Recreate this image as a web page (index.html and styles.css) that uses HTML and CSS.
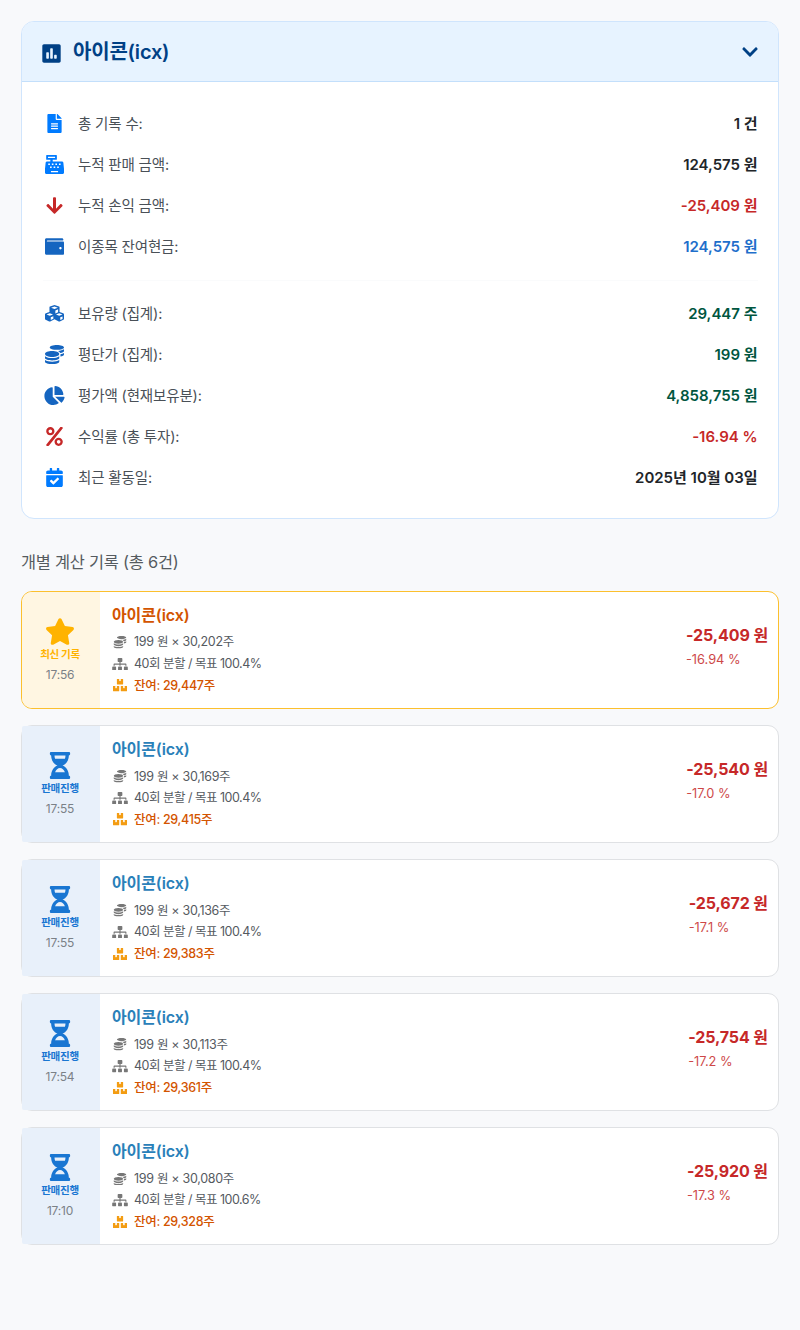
FILE: index.html
```html
<!DOCTYPE html>
<html lang="ko">
<head>
    <meta charset="UTF-8">
    <meta name="viewport" content="width=device-width, initial-scale=1.0">
    <title>아이콘(icx)</title>
    <link rel="stylesheet" href="styles.css">
</head>
<body>
    <svg class="sprite">
        <symbol id="poll" viewBox="0 0 448 512"><path fill-rule="evenodd" d="M408 32H40C18 32 0 50 0 72v368c0 22 18 40 40 40h368c22 0 40-18 40-40V72c0-22-18-40-40-40zM160 368c0 9-7 16-16 16h-32c-9 0-16-7-16-16V240c0-9 7-16 16-16h32c9 0 16 7 16 16zm96 0c0 9-7 16-16 16h-32c-9 0-16-7-16-16V144c0-9 7-16 16-16h32c9 0 16 7 16 16zm96 0c0 9-7 16-16 16h-32c-9 0-16-7-16-16v-64c0-9 7-16 16-16h32c9 0 16 7 16 16z"/></symbol>
        <symbol id="chevron" viewBox="0 0 448 512"><path d="M207 381.500 12.700 187.100c-9.400-9.400-9.400-24.600 0-33.900l22.700-22.700c9.400-9.400 24.500-9.400 33.900 0L224 284.500l154.700-154c9.400-9.300 24.500-9.300 33.900 0l22.700 22.700c9.400 9.400 9.400 24.600 0 33.900L241 381.500c-9.400 9.400-24.600 9.400-34 0z"/></symbol>
        <symbol id="file" viewBox="0 0 384 512"><path fill-rule="evenodd" d="M224 136V0H24C10.700 0 0 10.700 0 24v464c0 13.300 10.700 24 24 24h336c13.300 0 24-10.700 24-24V160H248c-13.200 0-24-10.800-24-24zm64 260c0 6.600-5.400 12-12 12H108c-6.600 0-12-5.400-12-12v-8c0-6.600 5.400-12 12-12h168c6.600 0 12 5.400 12 12zm0-64c0 6.600-5.400 12-12 12H108c-6.600 0-12-5.400-12-12v-8c0-6.600 5.400-12 12-12h168c6.600 0 12 5.400 12 12zm0-72v8c0 6.600-5.400 12-12 12H108c-6.600 0-12-5.400-12-12v-8c0-6.600 5.400-12 12-12h168c6.600 0 12 5.400 12 12zM384 121.900v6.100H256V0h6.100c6.400 0 12.500 2.500 17 7l97.900 98c4.500 4.500 7 10.600 7 16.900z"/></symbol>
        <symbol id="register" viewBox="0 0 512 512"><path fill-rule="evenodd" d="M48 0h256c10 0 16 6 16 16v96c0 10-6 16-16 16h-96v48h250c20 0 32 10 36 28l18 164v112c0 18-14 32-32 32H32c-18 0-32-14-32-32V368l18-164c4-18 16-28 36-28h90v-48H48c-10 0-16-6-16-16V16C32 6 38 0 48 0zm32 48v32h192V48zM88 226h44v42H88zm96 0h44v42h-44zm96 0h44v42h-44zm96 0h44v42h-44zM136 308h44v42h-44zm96 0h44v42h-44zm96 0h44v42h-44zM160 430v32h192v-32z"/></symbol>
        <symbol id="arrow" viewBox="0 0 448 512"><path d="M413.100 222.500l22.200 22.200c9.400 9.400 9.400 24.600 0 33.900L241 473c-9.400 9.400-24.600 9.400-33.900 0L12.700 278.600c-9.400-9.400-9.400-24.600 0-33.900l22.200-22.200c9.500-9.500 25-9.300 34.300.4L184 343.400V56c0-13.300 10.700-24 24-24h32c13.300 0 24 10.700 24 24v287.400l114.800-120.500c9.300-9.800 24.800-10 34.300-.4z"/></symbol>
        <symbol id="wallet" viewBox="0 0 512 512"><path fill-rule="evenodd" d="M484 120H64c-20 0-20-28 0-28h416c12 0 16-6 16-16 0-26-16-44-40-44H40C16 32 0 48 0 72v368c0 24 16 40 40 40h440c20 0 32-12 32-32V152c0-20-10-32-28-32zM416 336c-17.700 0-32-14.300-32-32s14.300-32 32-32 32 14.300 32 32-14.300 32-32 32z"/></symbol>
        <symbol id="cubes" viewBox="0 0 512 512"><path fill-rule="evenodd" d="M256 24 378 68q14 5 14 20v126l98 37q22 8 22 32v112q0 20-18 29l-94 47q-14 7-28 0l-116-57-116 57q-14 7-28 0l-94-47Q0 415 0 395V283q0-24 22-32l98-37V88q0-15 14-20zM165 98l91 36 91-36-91-34zm114 76v82l74-32v-83zM41 282l88 36 88-36-88-33zm114 78v72l70-35v-66zM295 282l88 36 88-36-88-33zm116 78v72l62-31v-67z"/></symbol>
        <symbol id="coins" viewBox="0 0 512 512"><path d="M0 405.300V448c0 35.300 86 64 192 64s192-28.700 192-64v-42.700C342.700 434.400 267.200 448 192 448S41.300 434.400 0 405.300zM320 128c106 0 192-28.700 192-64S426 0 320 0 128 28.700 128 64s86 64 192 64zM0 300.400V352c0 35.300 86 64 192 64s192-28.700 192-64v-51.600c-41.300 34-116.900 51.600-192 51.600S41.300 334.400 0 300.400zm416 11c57.300-11.100 96-31.700 96-55.400v-42.700c-23.200 16.400-57.300 27.600-96 34.500v63.600zM192 160C86 160 0 195.800 0 240s86 80 192 80 192-35.800 192-80-86-80-192-80zm219.300 56.300c60-10.800 100.700-32 100.700-56.300v-42.700c-35.500 25.100-96.500 38.600-160.700 41.800 29.500 14.300 51.200 33.500 60 57.200z"/></symbol>
        <symbol id="pie" viewBox="0 0 544 512"><path d="M527.800 288H290.500l158 158c6 6 15.800 6.500 22.200.8 38.700-36.500 65.300-85.600 73.100-140.800 1.400-9.500-6.500-18-16-18zm-15.800-64.800C503.700 103.700 408.300 8.300 288.800 0c-9.200-.6-16.800 7.100-16.800 16.200V240h223.800c9.100 0 16.800-7.600 16.200-16.800zM224 288V50.700c0-9.600-8.500-17.400-18-16C86.500 51.600-4.800 155.400.2 280.100 5.300 408.100 114.400 513.500 242.500 511.900c50.400-.6 96.900-16.900 135.300-44 7.900-5.600 8.400-17.200 1.600-24.100z"/></symbol>
        <symbol id="percent" viewBox="0 0 448 512"><path fill-rule="evenodd" d="M112 224c61.900 0 112-50.100 112-112S173.900 0 112 0 0 50.100 0 112s50.100 112 112 112zm0-160c26.500 0 48 21.500 48 48s-21.500 48-48 48-48-21.500-48-48 21.500-48 48-48zm224 224c-61.900 0-112 50.100-112 112s50.100 112 112 112 112-50.100 112-112-50.100-112-112-112zm0 160c-26.500 0-48-21.500-48-48s21.500-48 48-48 48 21.500 48 48-21.500 48-48 48zM392.300.2l31.600-.1c19.400-.1 30.900 21.800 19.700 37.800L77.400 501.600a24 24 0 0 1-19.600 10.200l-33.400.1c-19.500 0-30.900-21.900-19.700-37.800l368-463.700c4.500-6.400 11.800-10.200 19.600-10.200z"/></symbol>
        <symbol id="calendar" viewBox="0 0 448 512"><path fill-rule="evenodd" d="M436 160H12c-6.600 0-12-5.400-12-12v-36c0-26.500 21.500-48 48-48h48V12c0-6.600 5.400-12 12-12h40c6.600 0 12 5.400 12 12v52h128V12c0-6.600 5.400-12 12-12h40c6.600 0 12 5.400 12 12v52h48c26.500 0 48 21.500 48 48v36c0 6.600-5.400 12-12 12zM12 192h424c6.600 0 12 5.400 12 12v260c0 26.500-21.500 48-48 48H48c-26.500 0-48-21.500-48-48V204c0-6.600 5.400-12 12-12zm333.300 95.900-28.200-28.400c-4.700-4.700-12.300-4.700-17-.1l-106 105.200-46-46.400c-4.700-4.700-12.300-4.700-17-.1l-28.400 28.200c-4.700 4.700-4.700 12.300-.1 17l82.600 83.300c4.700 4.700 12.300 4.700 17 .1l143-141.800c4.700-4.700 4.700-12.300.1-17z"/></symbol>
        <symbol id="star" viewBox="0 0 576 512"><path d="M259.300 17.800 194 150.200 47.900 171.500c-26.200 3.800-36.700 36.100-17.700 54.600l105.700 103-25 145.500c-4.500 26.300 23.200 46 46.400 33.700L288 439.600l130.700 68.700c23.200 12.200 50.900-7.400 46.400-33.700l-25-145.500 105.700-103c19-18.500 8.500-50.800-17.700-54.600L382 150.200 316.700 17.800c-11.700-23.600-45.600-23.900-57.400 0z"/></symbol>
        <symbol id="hourglass" viewBox="0 0 384 512"><path fill-rule="evenodd" d="M360 0H24C10.700 0 0 10.700 0 24v16c0 13.300 10.700 24 24 24 0 91 51 167.700 120.800 192C75 280.300 24 357 24 448c-13.300 0-24 10.700-24 24v16c0 13.300 10.700 24 24 24h336c13.300 0 24-10.700 24-24v-16c0-13.300-10.700-24-24-24 0-91-51-167.700-120.800-192C309 231.700 360 155 360 64c13.300 0 24-10.700 24-24V24c0-13.300-10.700-24-24-24zM99 128c-7-20-11-41.300-11-64h208c0 22.800-4 44.200-11 64zm186 256H99c17-46.500 52.300-80 93-80s76 33.500 93 80z"/></symbol>
        <symbol id="sitemap" viewBox="0 0 640 512"><path d="M128 352H32c-17.700 0-32 14.300-32 32v96c0 17.700 14.300 32 32 32h96c17.700 0 32-14.300 32-32v-96c0-17.700-14.300-32-32-32zm-24-80h192v48h48v-48h192v48h48v-57.600c0-21.200-17.200-38.400-38.400-38.400H344v-64h40c17.700 0 32-14.300 32-32V32c0-17.700-14.300-32-32-32H256c-17.700 0-32 14.300-32 32v96c0 17.700 14.300 32 32 32h40v64H94.400C73.200 224 56 241.200 56 262.400V320h48zm264 80h-96c-17.700 0-32 14.300-32 32v96c0 17.700 14.300 32 32 32h96c17.700 0 32-14.300 32-32v-96c0-17.700-14.300-32-32-32zm240 0h-96c-17.700 0-32 14.300-32 32v96c0 17.700 14.300 32 32 32h96c17.700 0 32-14.300 32-32v-96c0-17.700-14.300-32-32-32z"/></symbol>
        <symbol id="boxes" viewBox="0 0 576 512"><path d="M560 288h-80v96l-32-21.300-32 21.300v-96h-80c-8.800 0-16 7.200-16 16v192c0 8.800 7.200 16 16 16h224c8.800 0 16-7.200 16-16V304c0-8.800-7.200-16-16-16zm-384-64h224c8.800 0 16-7.200 16-16V16c0-8.800-7.200-16-16-16h-80v96l-32-21.300L256 96V0h-80c-8.800 0-16 7.200-16 16v192c0 8.800 7.200 16 16 16zm64 64h-80v96l-32-21.300L96 384v-96H16c-8.800 0-16 7.200-16 16v192c0 8.800 7.200 16 16 16h224c8.800 0 16-7.200 16-16V304c0-8.800-7.200-16-16-16z"/></symbol>
    </svg>

    <div class="summary-card">
        <div class="summary-header">
            <svg class="header-icon"><use href="#poll"/></svg>
            <h2>아이콘(icx)</h2>
            <svg class="toggle-icon"><use href="#chevron"/></svg>
        </div>
        <div class="summary-body">
            <div class="summary-row"><svg class="bright"><use href="#file"/></svg><span class="label">총 기록 수:</span><span class="value">1 건</span></div>
            <div class="summary-row"><svg class="bright"><use href="#register"/></svg><span class="label">누적 판매 금액:</span><span class="value">124,575 원</span></div>
            <div class="summary-row"><svg class="loss"><use href="#arrow"/></svg><span class="label">누적 손익 금액:</span><span class="value loss">-25,409 원</span></div>
            <div class="summary-row"><svg class="blue"><use href="#wallet"/></svg><span class="label">이종목 잔여현금:</span><span class="value cash">124,575 원</span></div>
            <hr>
            <div class="summary-row"><svg class="blue"><use href="#cubes"/></svg><span class="label">보유량 (집계):</span><span class="value holding">29,447 주</span></div>
            <div class="summary-row"><svg class="blue"><use href="#coins"/></svg><span class="label">평단가 (집계):</span><span class="value holding">199 원</span></div>
            <div class="summary-row"><svg class="blue"><use href="#pie"/></svg><span class="label">평가액 (현재보유분):</span><span class="value holding">4,858,755 원</span></div>
            <div class="summary-row"><svg class="loss"><use href="#percent"/></svg><span class="label">수익률 (총 투자):</span><span class="value loss">-16.94 %</span></div>
            <div class="summary-row"><svg class="bright"><use href="#calendar"/></svg><span class="label">최근 활동일:</span><span class="value">2025년 10월 03일</span></div>
        </div>
    </div>

    <h3 class="list-title">개별 계산 기록 (총 6건)</h3>

    <div class="record-list">
        <div class="record latest">
            <div class="status">
                <svg><use href="#star"/></svg>
                <strong>최신 기록</strong>
                <time>17:56</time>
            </div>
            <div class="details">
                <h4>아이콘(icx)</h4>
                <p><svg><use href="#coins"/></svg>199 원 × 30,202주</p>
                <p class="split"><svg><use href="#sitemap"/></svg>40회 분할 / 목표 100.4%</p>
                <p class="remain"><svg><use href="#boxes"/></svg>잔여: 29,447주</p>
            </div>
            <div class="result"><strong>-25,409 원</strong><span>-16.94 %</span></div>
        </div>
        <div class="record">
            <div class="status">
                <svg><use href="#hourglass"/></svg>
                <strong>판매진행</strong>
                <time>17:55</time>
            </div>
            <div class="details">
                <h4>아이콘(icx)</h4>
                <p><svg><use href="#coins"/></svg>199 원 × 30,169주</p>
                <p class="split"><svg><use href="#sitemap"/></svg>40회 분할 / 목표 100.4%</p>
                <p class="remain"><svg><use href="#boxes"/></svg>잔여: 29,415주</p>
            </div>
            <div class="result"><strong>-25,540 원</strong><span>-17.0 %</span></div>
        </div>
        <div class="record">
            <div class="status">
                <svg><use href="#hourglass"/></svg>
                <strong>판매진행</strong>
                <time>17:55</time>
            </div>
            <div class="details">
                <h4>아이콘(icx)</h4>
                <p><svg><use href="#coins"/></svg>199 원 × 30,136주</p>
                <p class="split"><svg><use href="#sitemap"/></svg>40회 분할 / 목표 100.4%</p>
                <p class="remain"><svg><use href="#boxes"/></svg>잔여: 29,383주</p>
            </div>
            <div class="result"><strong>-25,672 원</strong><span>-17.1 %</span></div>
        </div>
        <div class="record">
            <div class="status">
                <svg><use href="#hourglass"/></svg>
                <strong>판매진행</strong>
                <time>17:54</time>
            </div>
            <div class="details">
                <h4>아이콘(icx)</h4>
                <p><svg><use href="#coins"/></svg>199 원 × 30,113주</p>
                <p class="split"><svg><use href="#sitemap"/></svg>40회 분할 / 목표 100.4%</p>
                <p class="remain"><svg><use href="#boxes"/></svg>잔여: 29,361주</p>
            </div>
            <div class="result"><strong>-25,754 원</strong><span>-17.2 %</span></div>
        </div>
        <div class="record">
            <div class="status">
                <svg><use href="#hourglass"/></svg>
                <strong>판매진행</strong>
                <time>17:10</time>
            </div>
            <div class="details">
                <h4>아이콘(icx)</h4>
                <p><svg><use href="#coins"/></svg>199 원 × 30,080주</p>
                <p class="split"><svg><use href="#sitemap"/></svg>40회 분할 / 목표 100.6%</p>
                <p class="remain"><svg><use href="#boxes"/></svg>잔여: 29,328주</p>
            </div>
            <div class="result"><strong>-25,920 원</strong><span>-17.3 %</span></div>
        </div>
    </div>
</body>
</html>
```

FILE: styles.css
```css
* {
    box-sizing: border-box;
}

body {
    margin: 0;
    padding: 20.7px 21px;
    min-height: 1330px;
    background-color: #f8f9fb;
    color: #212529;
    font-family: Inter, "Noto Sans CJK KR", sans-serif;
}

svg {
    display: block;
    flex-shrink: 0;
    fill: currentColor;
}

.sprite {
    display: none;
}

/* Summary card */
.summary-card {
    height: 498.6px;
    border: 1.5px solid #d0e5fd;
    border-radius: 13px;
    background-color: white;
    overflow: hidden;
}

.summary-header {
    display: flex;
    align-items: center;
    height: 60.3px;
    padding: 0 20.5px 0 20px;
    border-bottom: 1px solid #c3dffb;
    background-color: #e7f3ff;
    color: #004085;
}

.header-icon {
    width: 19px;
    height: 21px;
    margin-top: 4px;
}

.summary-header h2 {
    flex: 1;
    margin: 2px 0 0 12px;
    font-size: 20px;
    font-weight: 600;
    line-height: 28px;
    letter-spacing: -0.2px;
}

.toggle-icon {
    width: 16px;
    height: 18px;
    margin-top: 1px;
}

.summary-body {
    padding: 21px 20.5px 0;
}

.summary-row {
    display: flex;
    align-items: center;
    height: 41.05px;
    font-size: 15.2px;
    line-height: 24px;
}

.summary-row svg {
    width: 23px;
    height: 19px;
    margin-right: 12.5px;
}

.label {
    flex: 1;
    color: #495057;
    font-size: 14.5px;
    letter-spacing: -0.15px;
}

.value {
    font-size: 15px;
    font-weight: 600;
    letter-spacing: -0.02px;
}

.bright {
    color: #007bff;
}

.blue {
    color: #1565c0;
}

.cash {
    color: #1f6fcb;
}

.holding {
    color: #00563f;
}

.loss {
    color: #c62828;
}

hr {
    height: 1px;
    margin: 12.5px 0;
    border: none;
    background-color: #fafbfc;
}

/* Record list */
.list-title {
    margin: 30.7px 0 15.7px;
    color: #555b60;
    font-size: 16.4px;
    font-weight: 400;
    line-height: 25px;
    letter-spacing: -0.25px;
}

.record-list {
    display: flex;
    flex-direction: column;
    gap: 16.1px;
}

.record {
    display: flex;
    height: 118px;
    border: 1px solid #dfe1e4;
    border-radius: 11px;
    background-color: white;
}

.status {
    display: flex;
    flex-direction: column;
    align-items: center;
    width: 78px;
    padding: 26px 2px 0 0;
    border-radius: 2px 0 0 2px;
    background-color: #e8f0fa;
    color: #1976d2;
}

.status svg {
    width: 30px;
    height: 27px;
}

.status strong {
    font-size: 10.6px;
    font-weight: 700;
    line-height: 18px;
    margin-top: 1px;
    letter-spacing: -0.35px;
}

.status time {
    margin-top: 2px;
    color: #7b8187;
    font-size: 12px;
    line-height: 18px;
    letter-spacing: -0.2px;
}

.details {
    flex: 1;
    padding: 11px 12px;
}

.details h4 {
    margin: 0 0 5px;
    color: #2980b9;
    font-size: 16px;
    font-weight: 600;
    line-height: 24px;
    letter-spacing: -0.1px;
}

.details p {
    display: flex;
    align-items: center;
    margin: 0;
    height: 21.6px;
    color: #555a5f;
    font-size: 12.5px;
    line-height: 20px;
    letter-spacing: -0.3px;
}

.details .split {
    letter-spacing: -0.5px;
}

.details p svg {
    width: 16px;
    height: 12.5px;
    margin-right: 6px;
    color: #777;
}

.details .remain {
    color: #d35400;
    font-weight: 500;
}

.details .remain svg {
    color: #f39c12;
}

.result {
    display: flex;
    flex-direction: column;
    padding: 29.4px 10px 0 0;
    color: #c62828;
}

.result strong {
    font-size: 16px;
    font-weight: 700;
    line-height: 28px;
    letter-spacing: -0.1px;
}

.result span {
    font-size: 12.8px;
    line-height: 22px;
    opacity: 0.85;
}

/* Latest record highlight */
.latest {
    border-color: #fcc02e;
}

.latest .status {
    border-radius: 10px 0 0 10px;
    background-color: #fff6e2;
    color: #ffb300;
}

.latest h4 {
    color: #d35400;
}
```
